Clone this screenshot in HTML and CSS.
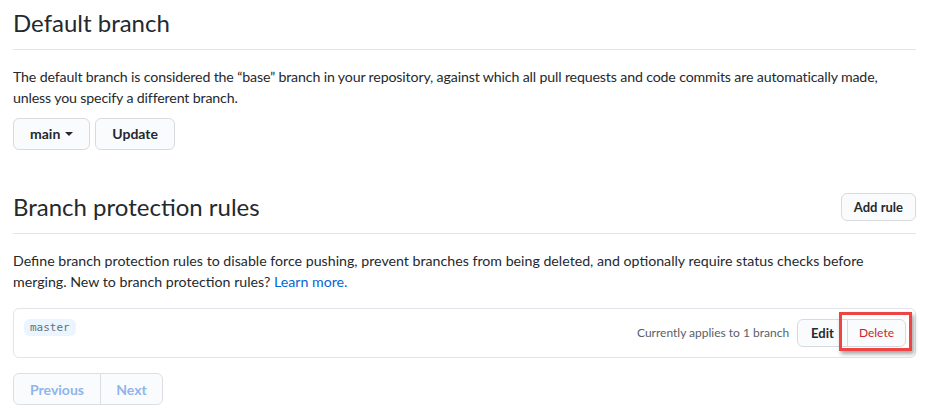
FILE: index.html
```html
<!DOCTYPE html>
<html lang="en">
<head>
<meta charset="utf-8">
<title>Branches</title>
<link rel="stylesheet" href="styles.css">
</head>
<body>
<main class="page">
  <section class="section">
    <div class="subhead">
      <h2 class="subhead-title">Default branch</h2>
    </div>
    <p class="desc desc-tight">The default branch is considered the “base” branch in your repository, against which all pull requests and code commits are automatically made, unless you specify a different branch.</p>
    <div class="actions">
      <button class="btn" type="button">main <span class="caret"></span></button>
      <button class="btn" type="button">Update</button>
    </div>
  </section>

  <section class="section spacious">
    <div class="subhead">
      <h2 class="subhead-title">Branch protection rules</h2>
      <button class="btn btn-sm" type="button">Add rule</button>
    </div>
    <p class="desc">Define branch protection rules to disable force pushing, prevent branches from being deleted, and optionally require status checks before merging. New to branch protection rules? <a class="link" href="#">Learn more.</a></p>

    <div class="rule-box">
      <span class="branch-name">master</span>
      <div class="rule-right">
        <span class="applies">Currently applies to 1 branch</span>
        <div class="btn-group">
          <button class="btn btn-sm group-first" type="button">Edit</button>
          <span class="delete-wrap">
            <button class="btn btn-sm group-last btn-danger" type="button">Delete</button>
            <span class="highlight"></span>
          </span>
        </div>
      </div>
    </div>

    <nav class="pagination">
      <span class="page-btn first">Previous</span>
      <span class="page-btn last">Next</span>
    </nav>
  </section>
</main>
</body>
</html>
```

FILE: styles.css
```css
* { box-sizing: border-box; }

html, body {
  margin: 0;
  padding: 0;
  background: #ffffff;
}

body {
  font-family: Lato, "Noto Sans", "Liberation Sans", sans-serif;
  font-size: 14.2px;
  line-height: 1.5;
  color: #24292e;
}

.page {
  width: 903px;
  margin-left: 13px;
  padding-top: 5px;
}

.spacious { margin-top: 39px; }

.subhead {
  display: flex;
  align-items: center;
  justify-content: space-between;
  padding-bottom: 8px;
  margin-bottom: 16px;
  border-bottom: 1px solid #e1e4e8;
}

.subhead-title {
  margin: 0;
  font-size: 24px;
  font-weight: 400;
  line-height: 36px;
  color: #24292e;
}

.desc {
  margin: 0 0 10px;
  line-height: 21px;
}

.desc-tight {
  letter-spacing: -0.15px;
}

.actions {
  display: flex;
  gap: 5px;
}

.btn {
  font-family: inherit;
  display: inline-flex;
  align-items: center;
  justify-content: center;
  height: 32px;
  padding: 0 16px;
  font-size: 14px;
  font-weight: 700;
  line-height: 20px;
  color: #24292e;
  background: #fafbfc;
  border: 1px solid #d8dadd;
  border-radius: 6px;
  cursor: pointer;
}

.caret {
  display: inline-block;
  width: 0;
  height: 0;
  margin-left: 5px;
  border-top: 4px solid #24292e;
  border-left: 4px solid transparent;
  border-right: 4px solid transparent;
}

.btn-sm {
  height: 28px;
  padding: 0 12px;
  font-size: 13px;
}

.link {
  color: #0366d6;
  text-decoration: none;
}

.rule-box {
  display: flex;
  justify-content: space-between;
  align-items: flex-start;
  margin-top: 16px;
  padding: 10px 9px 10px 10px;
  border: 1px solid #e1e4e8;
  border-radius: 6px;
}

.branch-name {
  display: inline-block;
  padding: 0 6px;
  font-family: "DejaVu Sans Mono", "Liberation Mono", monospace;
  font-size: 11px;
  line-height: 17px;
  color: #6a6f77;
  background: #eaf5ff;
  border-radius: 6px;
}

.rule-right {
  display: flex;
  align-items: center;
  gap: 8px;
}

.applies {
  font-size: 12px;
  color: #586069;
}

.btn-group { display: flex; }

.group-first {
  padding: 0 13px;
  border-top-right-radius: 0;
  border-bottom-right-radius: 0;
}

.group-last {
  border-top-left-radius: 0;
  border-bottom-left-radius: 0;
  margin-left: -1px;
}

.btn-danger {
  color: #cb2431;
  font-size: 12px;
  font-weight: 400;
  padding: 0 11px;
}

.delete-wrap {
  position: relative;
  display: inline-flex;
}

.highlight {
  position: absolute;
  left: -9px;
  right: -6px;
  top: -7px;
  bottom: -4px;
  border: 3px solid #ef4444;
  box-shadow: 2px 3px 4px rgba(0, 0, 0, 0.35);
  pointer-events: none;
}

.pagination {
  display: flex;
  margin-top: 15px;
}

.page-btn {
  display: inline-flex;
  align-items: center;
  justify-content: center;
  height: 32px;
  padding: 0 16px;
  font-size: 14px;
  font-weight: 700;
  color: #8fb5ec;
  background: #fafbfc;
  border: 1px solid #dcdee1;
}

.page-btn.first {
  width: 88px;
  border-radius: 6px 0 0 6px;
}

.page-btn.last {
  width: 63px;
  margin-left: -1px;
  border-radius: 0 6px 6px 0;
}
```
